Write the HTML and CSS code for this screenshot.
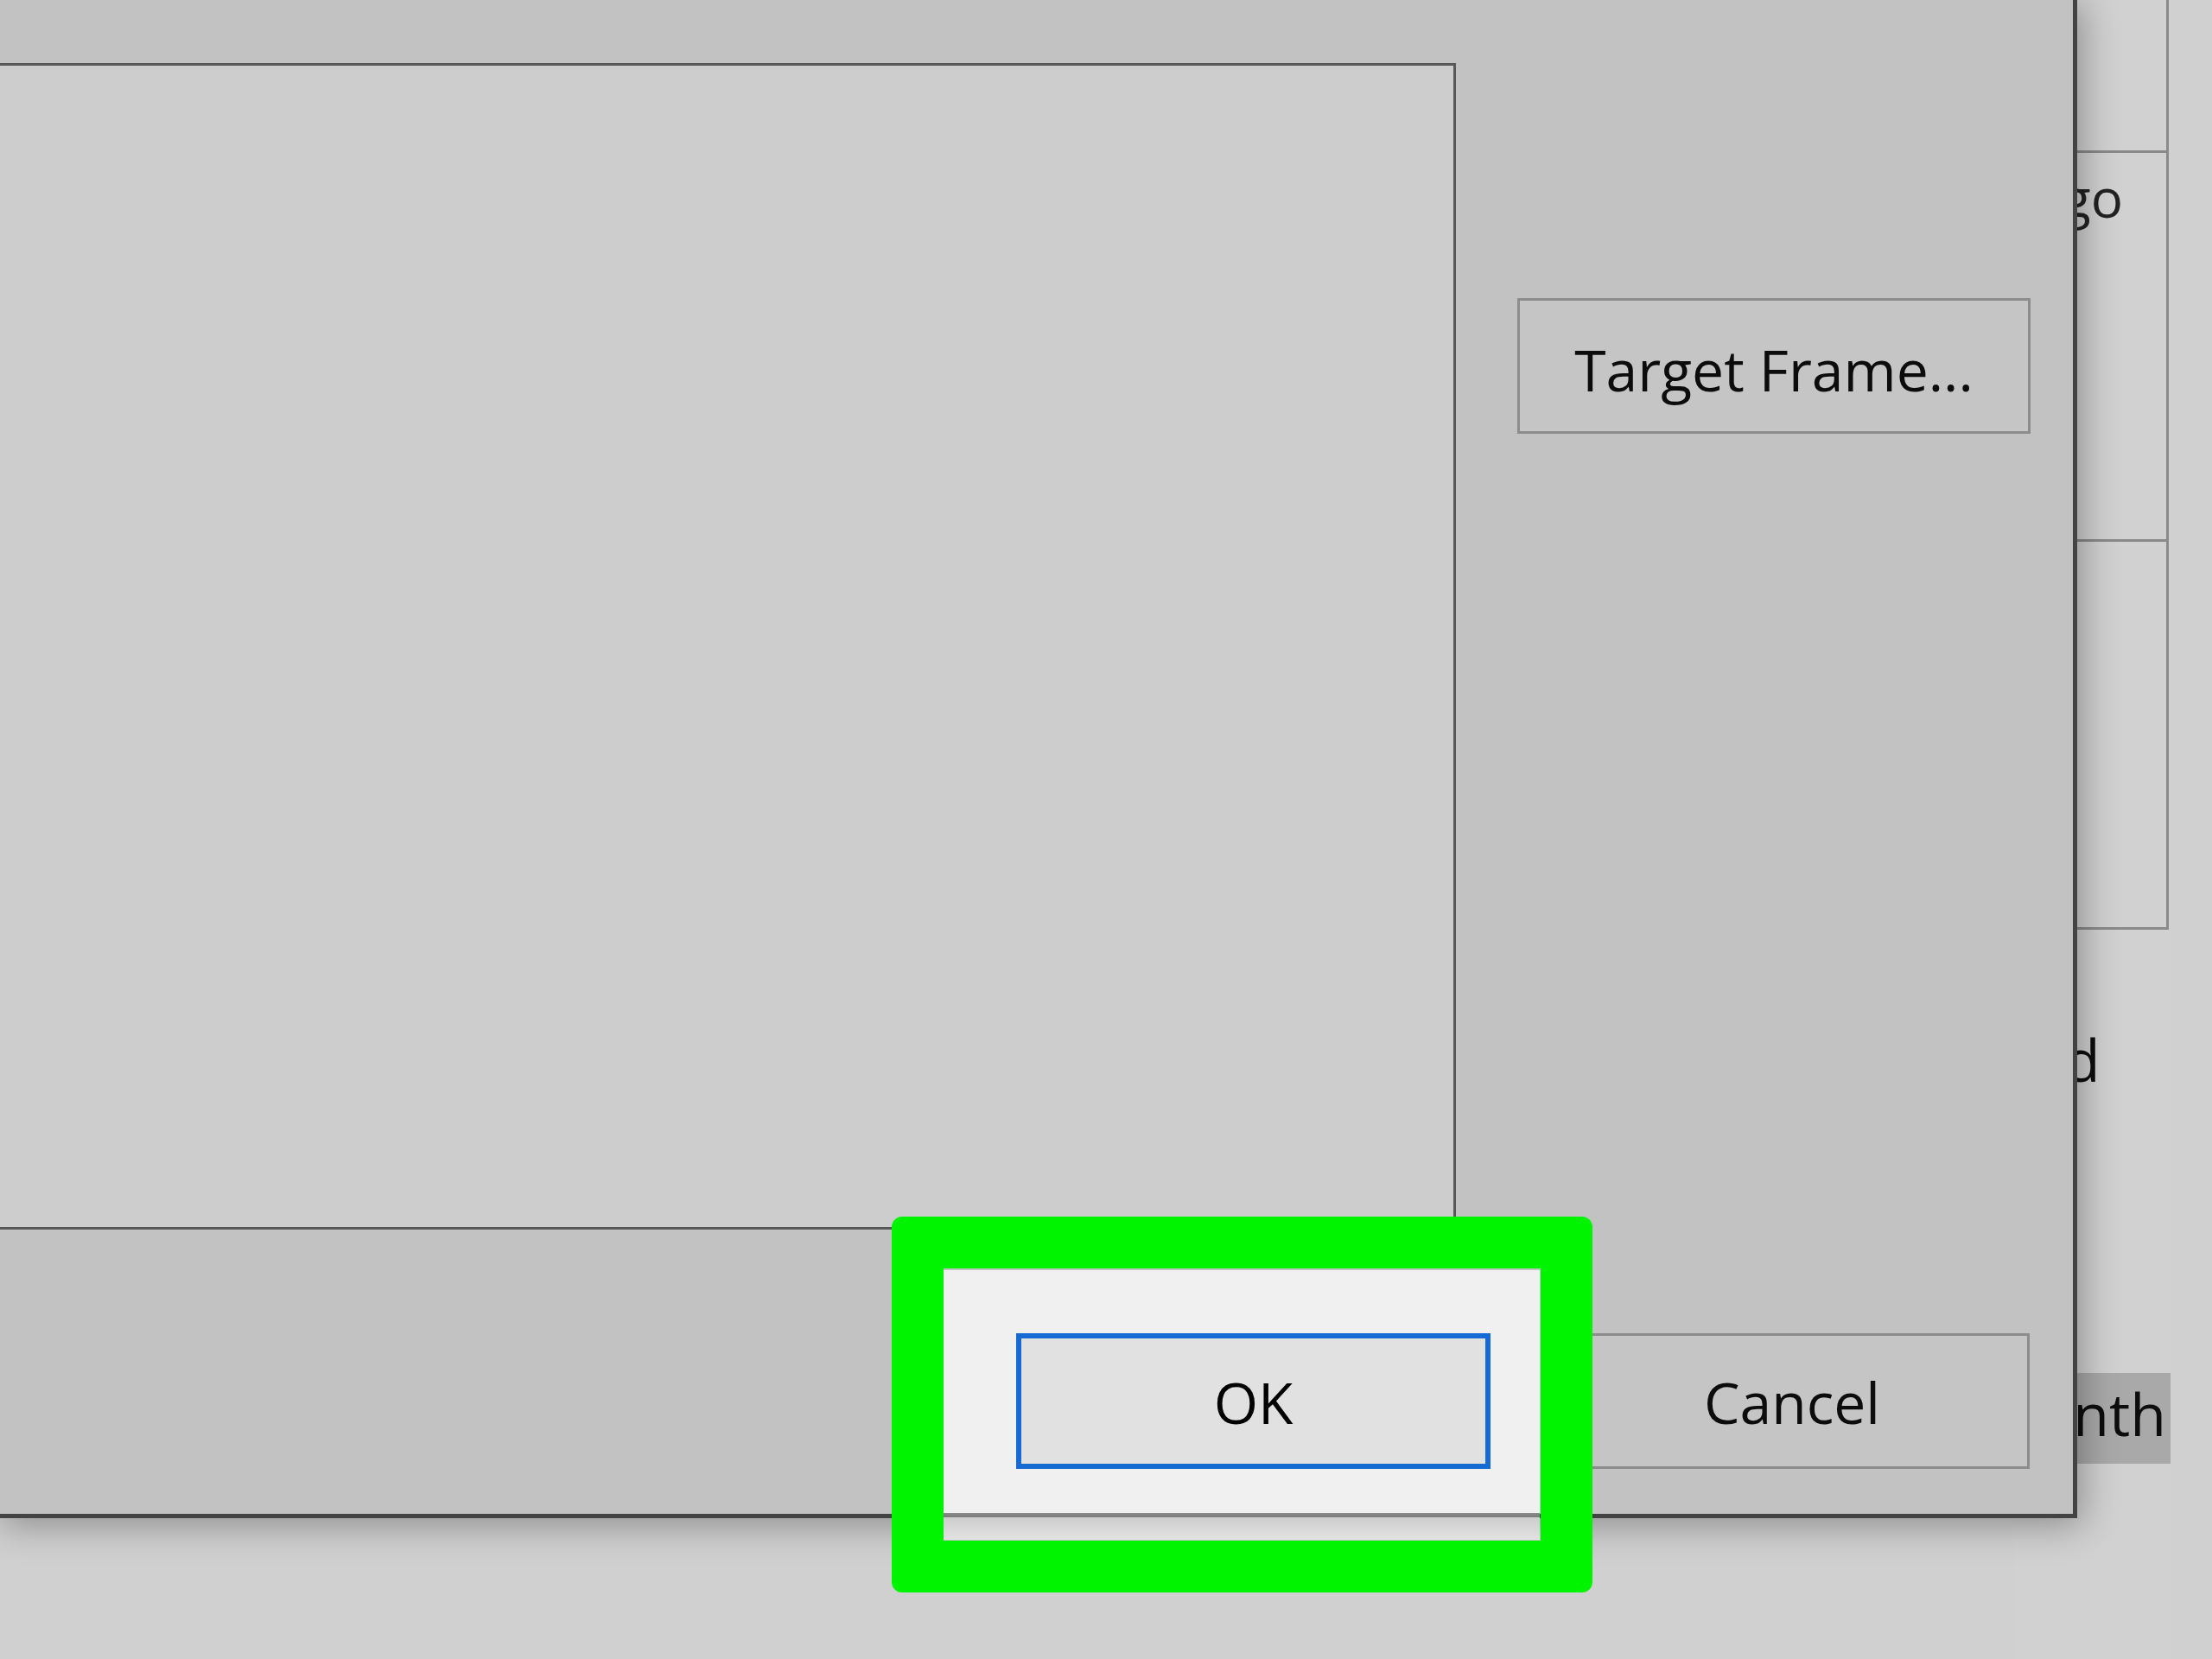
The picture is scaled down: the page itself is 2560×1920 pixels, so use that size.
FILE: index.html
```html
<!DOCTYPE html>
<html lang="en">
<head>
<meta charset="utf-8">
<title>Hyperlink dialog</title>
<link rel="stylesheet" href="styles.css">
</head>
<body>
<div class="desk">
  <div class="bgwin">
    <div class="cell c1"></div>
    <div class="cell c2"><span class="go">go</span></div>
    <div class="cell c3"></div>
    <div class="bgtext dline">d</div>
    <div class="bgtext hl">nth</div>
  </div>

  <div class="dialog">
    <div class="main">
      <div class="listbox"></div>
      <div class="side">
        <button class="btn target">Target Frame...</button>
      </div>
    </div>
    <div class="footer">
      <button class="btn ok">OK</button>
      <button class="btn cancel">Cancel</button>
    </div>
  </div>

  <div class="spot"></div>
  <div class="mark"></div>
</div>
</body>
</html>
```

FILE: styles.css
```css
html, body {
  margin: 0;
  padding: 0;
  background: #d0d0d0;
  overflow: hidden;
}

.desk {
  position: relative;
  width: 2560px;
  height: 1920px;
  overflow: hidden;
  background: #d0d0d0;
  font-family: "Open Sans", "Noto Sans", "Liberation Sans", sans-serif;
  color: #111;
}

/* background window peeking out on the right */
.bgwin {
  position: absolute;
  left: 2330px;
  top: 0;
  width: 182px;
  height: 1920px;
  display: flex;
  flex-direction: column;
  background: #d1d1d1;
}

.cell {
  box-sizing: border-box;
  margin-right: 2px;
  border-right: 3px solid #8a8a8a;
  border-bottom: 3px solid #8a8a8a;
}
.c1 { height: 177px; }
.c2 { height: 450px; padding: 9px 0 0 56px; }
.c3 { height: 449px; }

.go {
  display: block;
  font-size: 62px;
  line-height: normal;
  color: #222;
}

.bgtext {
  font-size: 68px;
  color: #0d0d0d;
}
.dline {
  margin-top: 103px;
  padding-left: 59px;
  line-height: normal;
}
.hl {
  margin-top: 317px;
  align-self: stretch;
  text-align: right;
  background: #a9a9a9;
  line-height: 93px;
  padding: 0 5px 12px 0;
}

/* main dialog */
.dialog {
  position: absolute;
  left: -5px;
  top: -5px;
  width: 2409px;
  height: 1762px;
  box-sizing: border-box;
  border: 5px solid #434343;
  background: #c2c2c2;
  box-shadow: 6px 8px 40px rgba(0, 0, 0, 0.32);
  padding-top: 73px;
  display: flex;
  flex-direction: column;
}

.main {
  display: flex;
  align-items: flex-start;
  gap: 71px;
  padding-right: 50px;
}

.listbox {
  box-sizing: border-box;
  width: 1695px;
  height: 1350px;
  margin-left: -10px;
  background: #cdcdcd;
  border: 3px solid #585858;
  flex: none;
}

.side {
  flex: 1;
  padding-top: 272px;
}

.btn {
  box-sizing: border-box;
  height: 157px;
  margin: 0;
  background: #c5c5c5;
  border: 3px solid #8c8c8c;
  border-radius: 0;
  font-family: "Open Sans", "Noto Sans", "Liberation Sans", sans-serif;
  font-size: 66px;
  font-weight: 400;
  color: #0c0c0c;
  line-height: normal;
  padding: 0;
  display: flex;
  align-items: center;
  justify-content: center;
}

.target {
  width: 594px;
  padding-top: 6px;
}

.footer {
  display: flex;
  justify-content: flex-end;
  gap: 74px;
  margin-top: 120px;
  padding-right: 50px;
}

.ok {
  width: 549px;
  background: #e1e1e1;
  border: 6px solid #156ad3;
  color: #000;
  position: relative;
  z-index: 1;
}

.cancel {
  width: 550px;
}

/* undimmed spotlight inside the highlight */
.spot {
  position: absolute;
  left: 1092px;
  top: 1470px;
  width: 690px;
  height: 312px;
  background:
    linear-gradient(to bottom,
      #f0f0f0 0, #f0f0f0 281px,
      #8c8c8c 281px, #7a7a7a 286px,
      #cdcdcd 286px, #e2e2e2 312px);
}

/* green annotation frame */
.mark {
  position: absolute;
  left: 1032px;
  top: 1408px;
  width: 811px;
  height: 435px;
  box-sizing: border-box;
  border: 60px solid #00f400;
  border-radius: 12px;
  z-index: 2;
}
```
